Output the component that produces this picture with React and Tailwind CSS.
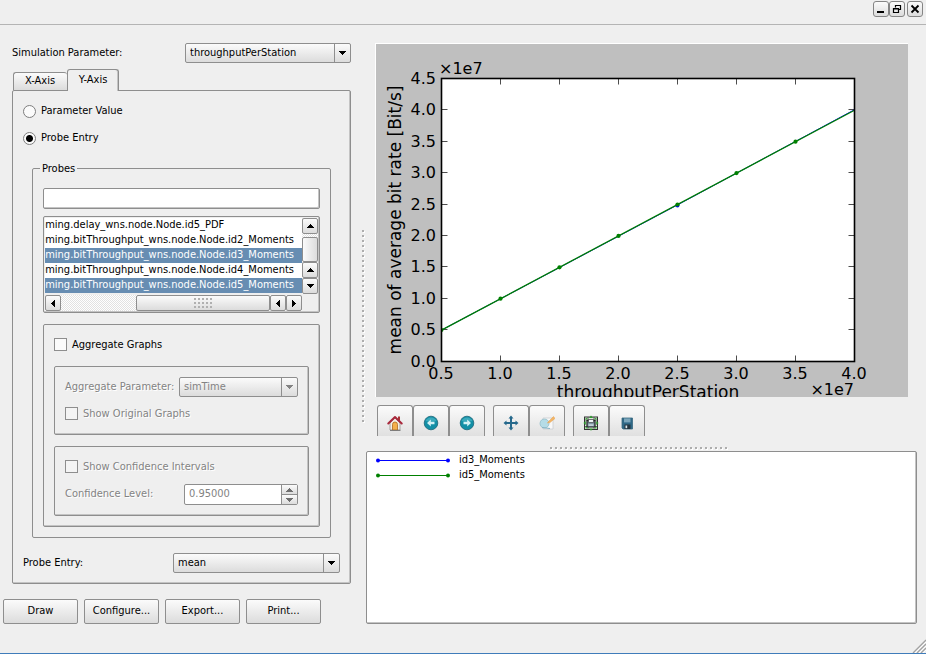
import React from "react";

const FACE = "bg-linear-to-b from-[#fbfbfb] to-[#dcdcdc]";
const EDGE = "border border-[#8e8e8e] rounded-[2px]";
const FRAME = "border border-[#8e8e8e] rounded-[2px] shadow-[inset_-1px_-1px_0_#c4c4c4]";

function Arrow({ dir, className = "" }) {
  const shapes = {
    up: "M0 4h7v-1h-1v-1h-1v-1h-1v-1h-1v1h-1v1h-1v1h-1z",
    down: "M0 0h7v1h-1v1h-1v1h-1v1h-1v-1h-1v-1h-1v-1h-1z",
    left: "M4 0v7h-1v-1h-1v-1h-1v-1h-1v-1h1v-1h1v-1h1v-1z",
    right: "M0 0v7h1v-1h1v-1h1v-1h1v-1h-1v-1h-1v-1h-1v-1z",
  };
  const flat = dir === "up" || dir === "down";
  return (
    <svg
      width={flat ? 7 : 4}
      height={flat ? 4 : 7}
      shapeRendering="crispEdges"
      className={className}
      aria-hidden="true"
    >
      <path d={shapes[dir]} fill="currentColor" />
    </svg>
  );
}

function Combo({ id, value, disabled, className = "" }) {
  return (
    <div className={`flex h-5 ${EDGE} ${FACE} ${disabled ? "text-[#838383]" : "text-black"} ${className}`}>
      <select
        id={id}
        disabled={disabled}
        defaultValue={value}
        className="min-w-0 flex-1 appearance-none bg-transparent pl-1 leading-4 opacity-100 outline-none"
      >
        <option>{value}</option>
      </select>
      <span className="pointer-events-none flex w-4 items-center justify-center border-l border-[#8e8e8e]">
        <Arrow dir="down" />
      </span>
    </div>
  );
}

function Check({ id, label, disabled }) {
  return (
    <div className="flex h-[13px] items-center gap-[5px]">
      <input
        id={id}
        type="checkbox"
        disabled={disabled}
        className={`size-[13px] appearance-none border border-[#8e8e8e] ${disabled ? "bg-[#f4f4f4]" : "bg-[#fbfbfb]"}`}
      />
      <label htmlFor={id} className={disabled ? "text-[#838383] text-shadow-[1px_1px_0_#fff]" : ""}>
        {label}
      </label>
    </div>
  );
}

function Radio({ id, label, checked }) {
  return (
    <div className="flex h-[13px] items-center gap-[5px]">
      <input
        id={id}
        type="radio"
        name="source"
        defaultChecked={checked}
        className="size-[13px] appearance-none rounded-full border border-[#7e7e7e] bg-[#fbfbfb] checked:bg-[radial-gradient(circle,#000_3px,#fbfbfb_4px)]"
      />
      <label htmlFor={id} className="pb-0.5">{label}</label>
    </div>
  );
}

function ScrollButton({ dir, label, className = "" }) {
  return (
    <button aria-label={label} className={`flex h-4 w-4 shrink-0 items-center justify-center ${EDGE} ${FACE} ${className}`}>
      <Arrow dir={dir} />
    </button>
  );
}

function Grip({ id, vertical }) {
  return (
    <svg width={vertical ? 3 : 178} height={vertical ? 193 : 3} shapeRendering="crispEdges" aria-hidden="true">
      <pattern id={id} width="5" height="5" patternUnits="userSpaceOnUse">
        <path d="M1 1h2v2H1z" fill="#fff" />
        <path d="M0 0h2v2H0z" fill="#adadad" />
      </pattern>
      <rect width={vertical ? 3 : 178} height={vertical ? 193 : 3} fill={`url(#${id})`} />
    </svg>
  );
}

const PROBES = [
  { name: "incoming.delay_wns.node.Node.id5_PDF", on: false },
  { name: "incoming.bitThroughput_wns.node.Node.id2_Moments", on: false },
  { name: "incoming.bitThroughput_wns.node.Node.id3_Moments", on: true },
  { name: "incoming.bitThroughput_wns.node.Node.id4_Moments", on: false },
  { name: "incoming.bitThroughput_wns.node.Node.id5_Moments", on: true },
];

const TRACK = "bg-[repeating-conic-gradient(#ffffff_0_25%,#e2e2e2_0_50%)] bg-size-[2px_2px]";

function ProbeList() {
  return (
    <div className={`mt-[7px] bg-[#efefef] p-px ${FRAME}`}>
      <div className="flex h-[77px]">
        <div className="flex h-[75px] min-w-0 flex-1 justify-end overflow-hidden bg-white">
          <ul role="listbox" aria-label="Probes" aria-multiselectable="true" className="shrink-0">
            {PROBES.map((p) => (
              <li
                key={p.name}
                role="option"
                aria-selected={p.on}
                className={`h-[15px] pr-2 leading-[14px] whitespace-nowrap ${p.on ? "bg-[#678db2] text-white" : ""}`}
              >
                {p.name}
              </li>
            ))}
          </ul>
        </div>
        <div className={`mb-px flex w-4 flex-col ${TRACK}`}>
          <ScrollButton dir="up" label="Scroll up" />
          <div className={`mt-[3px] flex-1 ${EDGE} bg-linear-to-r from-[#fbfbfb] to-[#dcdcdc]`} />
          <ScrollButton dir="up" label="Line up" />
          <ScrollButton dir="down" label="Scroll down" />
        </div>
      </div>
      <div className="flex h-4">
        <div className={`flex flex-1 ${TRACK}`}>
          <ScrollButton dir="left" label="Scroll left" />
          <div className={`ml-[75px] flex flex-1 items-center justify-center ${EDGE} ${FACE}`}>
            <span className="h-[11px] w-[19px] bg-[radial-gradient(circle_at_1px_1px,#b0b0b0_1px,transparent_1px)] bg-size-[4px_4px]" />
          </div>
          <ScrollButton dir="left" label="Page left" />
          <ScrollButton dir="right" label="Scroll right" />
        </div>
        <div className="w-4" />
      </div>
    </div>
  );
}

const X_TICKS = ["0.5", "1.0", "1.5", "2.0", "2.5", "3.0", "3.5", "4.0"];
const Y_TICKS = ["0.0", "0.5", "1.0", "1.5", "2.0", "2.5", "3.0", "3.5", "4.0", "4.5"];
const px = (i) => 65.5 + i * 59;
const py = (i) => 317.5 - i * 31.4;

function Chart() {
  return (
    <svg
      viewBox="0 0 532 353"
      className="block h-[353px] w-full font-['DejaVu_Sans',sans-serif] text-[16px]"
      role="img"
      aria-label="mean of average bit rate over throughputPerStation"
    >
      <rect x="65.5" y="34.5" width="413" height="283" fill="#fff" />
      <g stroke="#000" strokeWidth="0.7">
        {X_TICKS.map((t, i) => (
          <path key={t} d={`M${px(i)} 34.5v6M${px(i)} 317.5v-6`} />
        ))}
        {Y_TICKS.map((t, i) => (
          <path key={t} d={`M65.5 ${Math.round(py(i)) - 0.5}h6M478.5 ${Math.round(py(i)) - 0.5}h-6`} />
        ))}
      </g>
      <path d={`M${px(0)} ${py(1)}L${px(4)} ${py(5) + 0.4}L${px(7)} ${py(8) - 0.6}`} stroke="#00f" fill="none" />
      <circle cx={px(4)} cy={py(5) + 1} r="2" fill="#00f" />
      <path d={`M${px(0)} ${py(1)}L${px(7)} ${py(8)}`} stroke="#008000" strokeWidth="1.3" fill="none" />
      {[1, 2, 3, 4, 5, 6].map((i) => (
        <circle key={i} cx={px(i)} cy={py(i + 1)} r="2.1" fill="#008000" />
      ))}
      <path d={`M65.5 ${py(1) - 2}a2 2 0 0 1 0 4z`} fill="#008000" />
      <rect x="65.5" y="34.5" width="413" height="283" fill="none" stroke="#000" strokeWidth="1.6" />
      <g fill="#000" textAnchor="middle">
        {X_TICKS.map((t, i) => (
          <text key={t} x={px(i) - 0.5} y="335">{t}</text>
        ))}
      </g>
      <g fill="#000" textAnchor="end">
        {Y_TICKS.map((t, i) => (
          <text key={t} x="60" y={Math.round(py(i)) + 5}>{t}</text>
        ))}
        <text x="478" y="351">×1e7</text>
      </g>
      <text x="63" y="30">×1e7</text>
      <text x="272" y="354" textAnchor="middle" className="text-[17px]">throughputPerStation</text>
      <text transform="translate(25 176) rotate(-90)" textAnchor="middle" className="text-[17px]">mean of average bit rate [Bit/s]</text>
    </svg>
  );
}

function HomeIcon() {
  return (
    <svg width="16" height="16" viewBox="0 0 16 16" aria-hidden="true">
      <path d="M11 1.5h2v4h-2z" fill="#a33" />
      <path d="M3 8l5-5 5 5v7H3z" fill="#f3efe8" stroke="#8a8580" strokeWidth=".7" />
      <path d="M5.500 15V9.500a2.500 2.500 0 0 1 5 0V15z" fill="#f5b04c" stroke="#b06a20" strokeWidth=".8" />
      <path d="M1.300 8.500L8 2l6.700 6.500" fill="none" stroke="#a8283c" strokeWidth="2" strokeLinejoin="round" strokeLinecap="round" />
      <path d="M3 15.400h10.500" stroke="#777" />
    </svg>
  );
}

function RoundArrowIcon({ flip }) {
  return (
    <svg width="16" height="16" viewBox="0 0 16 16" className={flip ? "-scale-x-100" : ""} aria-hidden="true">
      <circle cx="8" cy="8" r="6.800" fill="#138fa6" stroke="#1c6577" strokeWidth=".8" />
      <path d="M2.500 6a6 6 0 0 1 11 0a14 7 0 0 1-11 0z" fill="#55bccb" opacity=".6" />
      <path d="M4 8l3.800-3.500v2.200h3.700v2.600H7.800v2.200z" fill="#d4f1f5" />
    </svg>
  );
}

function MoveIcon() {
  return (
    <svg width="16" height="16" viewBox="0 0 16 16" aria-hidden="true">
      <path d="M8 2v12M2 8h12" stroke="#26698c" strokeWidth="2" />
      <path d="M8 .5L10.500 3.500h-5zM8 15.500l2.500-3h-5zM.5 8l3-2.500v5zM15.500 8l-3-2.500v5z" fill="#26698c" />
    </svg>
  );
}

function ZoomRectIcon() {
  return (
    <svg width="16" height="16" viewBox="0 0 16 16" aria-hidden="true">
      <path d="M4 3h10v11H4z" fill="#f8f8f8" stroke="#c9cdd0" strokeWidth=".8" />
      <circle cx="5.500" cy="8.500" r="4.500" fill="#b5dce6" stroke="#93bcc9" strokeWidth=".8" />
      <path d="M3 12.500l8 1" stroke="#86b4c4" strokeWidth="1.200" />
      <path d="M9 7l5.500-5.500 1.500 2-5 4-2.500.6z" fill="#f4b565" stroke="#e0a055" strokeWidth=".5" />
    </svg>
  );
}

function SubplotsIcon() {
  return (
    <svg width="16" height="16" viewBox="0 0 16 16" aria-hidden="true">
      <rect x="1.500" y="2" width="13" height="12.500" fill="#dfe6df" stroke="#333" strokeWidth="1" />
      <path d="M2 5h12M2 11.500h12M5 2v12M11 2v12" stroke="#444" strokeWidth=".8" />
      <path d="M4 5.500h8V12H4z" fill="#7f95a3" stroke="#222" strokeWidth="1.200" />
      <path d="M5.500 4.500h5v3h-5z" fill="#eef4f6" stroke="#333" strokeWidth=".6" />
      <path d="M5.500 9.200h5v1.800h-5z" fill="#c3d2da" />
      <path d="M8 .5l2 2.400H6zM8 15.800l2-2.400H6zM.4 8l2.400-2v4zM15.600 8l-2.400-2v4z" fill="#2f9a2f" />
      <path d="M2.500 3h1.800v1.500H2.500zM11.700 3h1.800v1.500h-1.800zM2.500 12h1.800v1.500H2.500zM11.700 12h1.800v1.500h-1.800z" fill="#3fae3f" />
    </svg>
  );
}

function SaveIcon() {
  return (
    <svg width="16" height="16" viewBox="0 0 16 16" aria-hidden="true">
      <path d="M3 3h10.500v11H4l-1-1z" fill="#2f6886" stroke="#3a6a82" strokeWidth=".8" />
      <path d="M5 3.400h6.500v4H5z" fill="#7ba5ba" />
      <path d="M5.500 9.500h6V14h-6z" fill="#243540" />
      <path d="M6.500 10.500h1.700v2.700H6.500z" fill="#dfe9ee" />
    </svg>
  );
}

const TOOLS = [
  [
    { name: "Home", icon: <HomeIcon /> },
    { name: "Back", icon: <RoundArrowIcon /> },
    { name: "Forward", icon: <RoundArrowIcon flip /> },
  ],
  [
    { name: "Pan", icon: <MoveIcon /> },
    { name: "Zoom to rectangle", icon: <ZoomRectIcon /> },
  ],
  [
    { name: "Configure subplots", icon: <SubplotsIcon /> },
    { name: "Save", icon: <SaveIcon /> },
  ],
];

function LegendRow({ name, className }) {
  return (
    <li className="flex h-[15px] items-center gap-[9px]">
      <svg width="74" height="7" className={className} aria-hidden="true">
        <path d="M2 4.500h70" stroke="currentColor" />
        <circle cx="2" cy="4.500" r="2" fill="currentColor" />
        <circle cx="72" cy="4.500" r="2" fill="currentColor" />
      </svg>
      <span className="leading-[14px]">{name}</span>
    </li>
  );
}

function WindowButton({ label, children }) {
  return (
    <button aria-label={label} className={`flex size-4 items-center justify-center rounded-[3px] border border-[#858585] ${FACE}`}>
      <svg width="10" height="10" viewBox="0 0 10 10" fill="none" stroke="#000" aria-hidden="true">
        {children}
      </svg>
    </button>
  );
}

export default function App() {
  return (
    <div className="relative flex min-h-screen flex-col border-b border-[#3f7cba] bg-[#efefef] font-['DejaVu_Sans_Condensed','DejaVu_Sans',sans-serif] text-[11px] leading-[13px] text-black">
      <header className="flex h-[25px] justify-end border-b border-[#b4b4b4] pt-px pr-[3px]">
        <WindowButton label="Minimize">
          <path d="M1 8h7" strokeWidth="2" />
        </WindowButton>
        <WindowButton label="Restore">
          <path d="M3.500 3.500v-2h5v4h-2M3 1.500h6" strokeWidth="1.200" />
          <path d="M1.500 4.500h5v4h-5zM1 5h6" strokeWidth="1.200" />
        </WindowButton>
        <span className="w-0.5" />
        <WindowButton label="Close">
          <path d="M1.500 1.500l7 7M8.500 1.500l-7 7" strokeWidth="1.800" />
        </WindowButton>
      </header>

      <main className="flex flex-1 pt-[18px] pr-[9px] pb-[29px]">
        <section className="flex w-[351px] shrink-0 flex-col pl-[3px]">
          <div className="flex flex-1 flex-col pl-[9px]">
            <div className="flex items-center justify-between">
              <label htmlFor="sim" className="pb-0.5">Simulation Parameter:</label>
              <Combo id="sim" value="throughputPerStation" className="w-[166px]" />
            </div>

            <div role="tablist" className="mt-1.5 flex h-[21px] items-end pl-px">
              <button role="tab" aria-selected="false" className={`h-[18px] w-[54px] rounded-t-[3px] border border-r-0 border-b-0 border-[#8e8e8e] pr-px pb-0.5 ${FACE}`}>
                X-Axis
              </button>
              <button role="tab" aria-selected="true" className="relative -mb-px h-[22px] w-[52px] rounded-t-[3px] border border-b-0 border-[#8e8e8e] bg-[#efefef] pb-0.5 shadow-[inset_-1px_0_0_#c4c4c4]">
                Y-Axis
              </button>
            </div>

            <div className={`flex flex-1 flex-col px-[10px] pt-[14px] pb-[10px] ${FRAME}`}>
              <div className="flex flex-col gap-[14px]">
                <Radio id="pv" label="Parameter Value" />
                <Radio id="pe" label="Probe Entry" checked />
              </div>

              <fieldset className="mx-[9px] mt-[17px] min-w-0 rounded-[2px] border border-[#8e8e8e] px-[10px] pt-[13px] pb-[10px]">
                <legend className="-ml-[3px] px-0.5">Probes</legend>
                <input aria-label="Filter probes" className={`block h-[21px] w-full bg-white px-1 outline-none ${FRAME}`} />
                <ProbeList />

                <div className={`mt-[11px] px-[10px] pt-[13px] pb-[10px] ${FRAME}`}>
                  <Check id="agg" label="Aggregate Graphs" />
                  <div className={`mt-[15px] px-[10px] pt-[10px] pb-[14px] ${FRAME}`}>
                    <div className="mb-[10px] flex items-center justify-between">
                      <label htmlFor="aggp" className="pb-0.5 text-[#838383] text-shadow-[1px_1px_0_#fff]">Aggregate Parameter:</label>
                      <Combo id="aggp" value="simTime" disabled className="w-[119px]" />
                    </div>
                    <Check id="orig" label="Show Original Graphs" disabled />
                  </div>
                  <div className={`mt-[11px] px-[10px] pt-[13px] pb-[10px] ${FRAME}`}>
                    <Check id="conf" label="Show Confidence Intervals" disabled />
                    <div className="mt-[11px] flex items-center justify-between">
                      <label htmlFor="level" className="pb-0.5 text-[#838383] text-shadow-[1px_1px_0_#fff]">Confidence Level:</label>
                      <div className={`flex h-[21px] w-[114px] bg-white ${EDGE}`}>
                        <input id="level" disabled defaultValue="0.95000" className="min-w-0 flex-1 pb-0.5 pl-1 leading-4 text-[#838383]" />
                        <div className="flex w-4 flex-col border-l border-[#8e8e8e] text-[#6e6e6e]">
                          <button disabled aria-label="Increase" className={`flex flex-1 items-center justify-center border-b border-[#8e8e8e] ${FACE}`}>
                            <Arrow dir="up" />
                          </button>
                          <button disabled aria-label="Decrease" className={`flex flex-1 items-center justify-center ${FACE}`}>
                            <Arrow dir="down" />
                          </button>
                        </div>
                      </div>
                    </div>
                  </div>
                </div>
              </fieldset>

              <div className="mt-[15px] flex items-center justify-between">
                <label htmlFor="entry" className="pb-0.5">Probe Entry:</label>
                <Combo id="entry" value="mean" className="w-[167px]" />
              </div>
            </div>
          </div>

          <div className="mt-[15px] flex gap-1.5">
            {["Draw", "Configure...", "Export...", "Print..."].map((t) => (
              <button key={t} className={`h-[25px] w-[75px] pb-0.5 ${EDGE} ${FACE}`}>
                {t}
              </button>
            ))}
          </div>
        </section>

        <div role="separator" className="flex w-[15px] shrink-0 items-center pb-[14px] pl-[11px]">
          <Grip id="grip-v" vertical />
        </div>

        <section className="flex min-w-0 flex-1 flex-col">
          <div className="mx-[9px] border-t border-l border-white bg-[#bfbfbf]">
            <Chart />
          </div>

          <div role="toolbar" className="mt-2 flex gap-2 pl-[11px]">
            {TOOLS.map((group) => (
              <div key={group[0].name} className="flex">
                {group.map((tool) => (
                  <button
                    key={tool.name}
                    aria-label={tool.name}
                    className="flex h-[31px] w-9 items-center justify-center rounded-t-[3px] border border-b-0 border-[#8e8e8e] bg-linear-to-b from-[#fbfbfb] to-[#e0e0e0] pt-[3px]"
                  >
                    {tool.icon}
                  </button>
                ))}
              </div>
            ))}
          </div>

          <div role="separator" className="mt-[11px] flex justify-center pr-1.5">
            <Grip id="grip-h" />
          </div>

          <ul className={`mt-px flex-1 bg-white pl-[9px] ${FRAME}`}>
            <LegendRow name="id3_Moments" className="text-[#0000ff]" />
            <LegendRow name="id5_Moments" className="text-[#008000]" />
          </ul>
        </section>
      </main>

      <svg width="14" height="14" className="absolute right-0 bottom-0" aria-hidden="true">
        <path d="M1 14L14 1M5 14l9-9M9 14l5-5" stroke="#a2a2a2" strokeWidth="1.300" />
        <path d="M3 14L14 3M7 14l7-7M11 14l3-3" stroke="#fff" />
      </svg>
    </div>
  );
}
